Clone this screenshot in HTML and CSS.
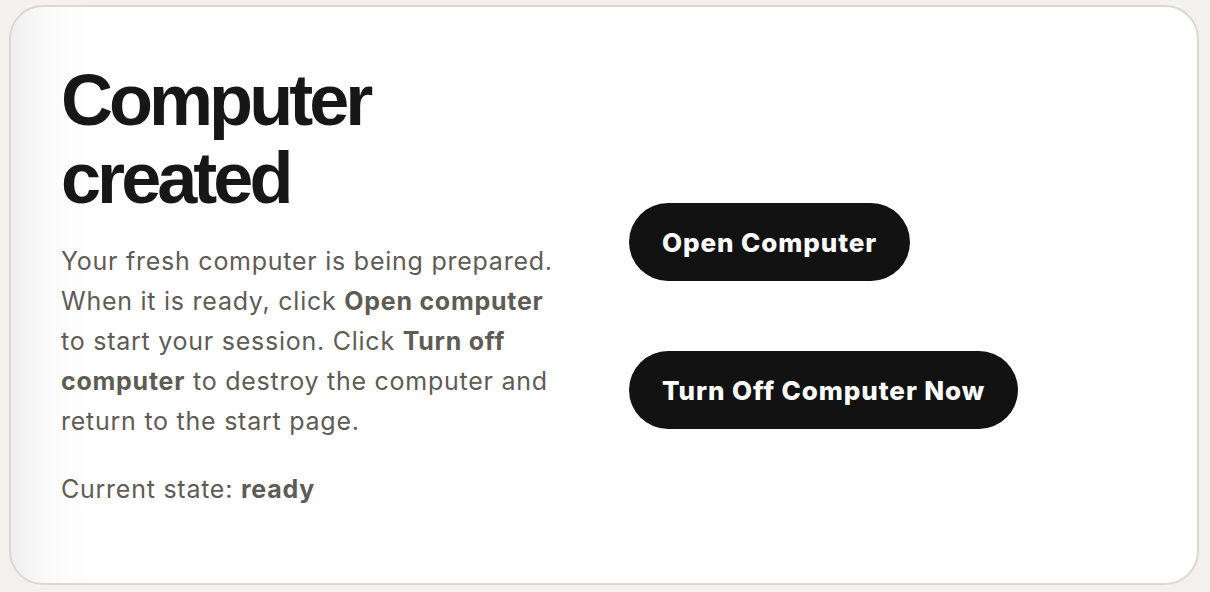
FILE: index.html
```html
<!DOCTYPE html>
<html lang="en">
<head>
    <meta charset="UTF-8">
    <meta name="viewport" content="width=device-width, initial-scale=1.0">
    <title>Computer created</title>
    <link rel="stylesheet" href="styles.css">
</head>
<body>

    <div class="card">
        <div class="info">
            <h1 class="title">Computer created</h1>
            <p class="text">Your fresh computer is being prepared. When it is ready, click <b>Open computer</b> to start your session. Click <b>Turn off computer</b> to destroy the computer and return to the start page.</p>
            <p class="text state">Current state: <b>ready</b></p>
        </div>
        <div class="actions">
            <button class="pill">Open Computer</button>
            <button class="pill">Turn Off Computer Now</button>
        </div>
    </div>

</body>
</html>
```

FILE: styles.css
```css
body {
    margin: 0;
    padding: 5px 11px 7px 9px;
    background-color: #f2f1ed;
    font-family: Inter, 'Noto Sans', sans-serif;
    height: 100vh;
    box-sizing: border-box;
}

.card {
    height: 100%;
    box-sizing: border-box;
    border: 2px solid #dcd8d0;
    border-radius: 34px;
    background: linear-gradient(90deg, #efefef 0, #fbfbfb 40px, #ffffff 80px);
    display: grid;
    grid-template-columns: 500px 1fr;
    gap: 68px;
    align-items: start;
    padding: 54px 50px 0;
}

.title {
    font-family: 'Liberation Sans', Arial, sans-serif;
    font-size: 72px;
    line-height: 78px;
    letter-spacing: -0.055em;
    font-weight: bold;
    color: #171717;
    margin: 0 0 24px;
}

.text {
    color: #5f5b55;
    font-size: 25px;
    line-height: 40px;
    letter-spacing: 0.03em;
    margin: 0;
}

.text b {
    font-weight: 700;
}

.state {
    margin-top: 28px;
}

.actions {
    display: flex;
    flex-direction: column;
    align-items: flex-start;
    gap: 70px;
    margin-top: 142px;
}

.pill {
    background-color: #121212;
    color: white;
    border: none;
    border-radius: 40px;
    font-family: Inter, sans-serif;
    font-size: 26px;
    font-weight: 800;
    letter-spacing: 0.035em;
    padding: 0 33px;
    height: 78px;
    cursor: pointer;
}
```
